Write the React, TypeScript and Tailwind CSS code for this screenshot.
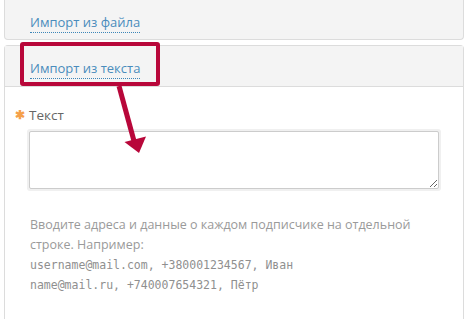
const Link = ({ children }: { children: string }) => (
  <span className="inline-block border-b border-dotted border-[#3d86b8] text-[13px] leading-[19px] text-[#4a8cbc]">
    {children}
  </span>
);

export default function App() {
  return (
    <div className="relative h-[319px] w-[470px] overflow-hidden bg-white font-['Open_Sans',sans-serif]">
      <div className="ml-[4px] w-[460px]">
        <div className="h-[40px] rounded-b-[4px] border border-t-0 border-[#dcdcdc] bg-[#f4f4f4] pl-[25px] pt-[9px]">
          <Link>Импорт из файла</Link>
        </div>

        <div className="mt-[5px] h-[300px] rounded-t-[4px] border border-b-0 border-[#dcdcdc]">
          <div className="h-[41px] border-b border-[#dcdcdc] bg-[#f4f4f4] pl-[25px] pt-[9px]">
            <Link>Импорт из текста</Link>
          </div>

          <div className="pl-[10px] pr-[20px] pt-[18px]">
            <div className="flex items-center gap-[4px] text-[13.5px] leading-[20px] text-[#666]">
              <span className="text-[12px] font-bold text-[#f5a04a]">✱</span>
              <span>Текст</span>
            </div>
            <div className="ml-[12px] mt-[4px] w-[414px] rounded-[3px] bg-[#f0f0f0] p-[2px]">
              <textarea className="block h-[58px] w-full rounded-[2px] border border-[#cccccc] bg-white outline-none" />
            </div>

            <div className="ml-[15px] mt-[24px] text-[12.5px] leading-[20px] text-[#9a9a9a]">
              <p>Вводите адреса и данные о каждом подписчике на отдельной строке. Например:</p>
              <p className="font-['DejaVu_Sans_Mono',monospace] text-[11.5px] text-[#8f8f8f]">
                username@mail.com, +380001234567, Иван
              </p>
              <p className="font-['DejaVu_Sans_Mono',monospace] text-[11.5px] text-[#8f8f8f]">
                name@mail.ru, +740007654321, Пётр
              </p>
            </div>
          </div>
        </div>
      </div>

      <div className="absolute left-[20px] top-[42px] h-[44px] w-[140px] rounded-[3px] border-4 border-[#b8073a]" />
      <svg className="absolute left-0 top-0" width="470" height="319" viewBox="0 0 470 319">
        <path d="M119 86 L134 141" stroke="#b8073a" strokeWidth="5" fill="none" />
        <path d="M139 153 L124.5 142 L146 136.5 Z" fill="#b8073a" />
      </svg>
    </div>
  );
}
